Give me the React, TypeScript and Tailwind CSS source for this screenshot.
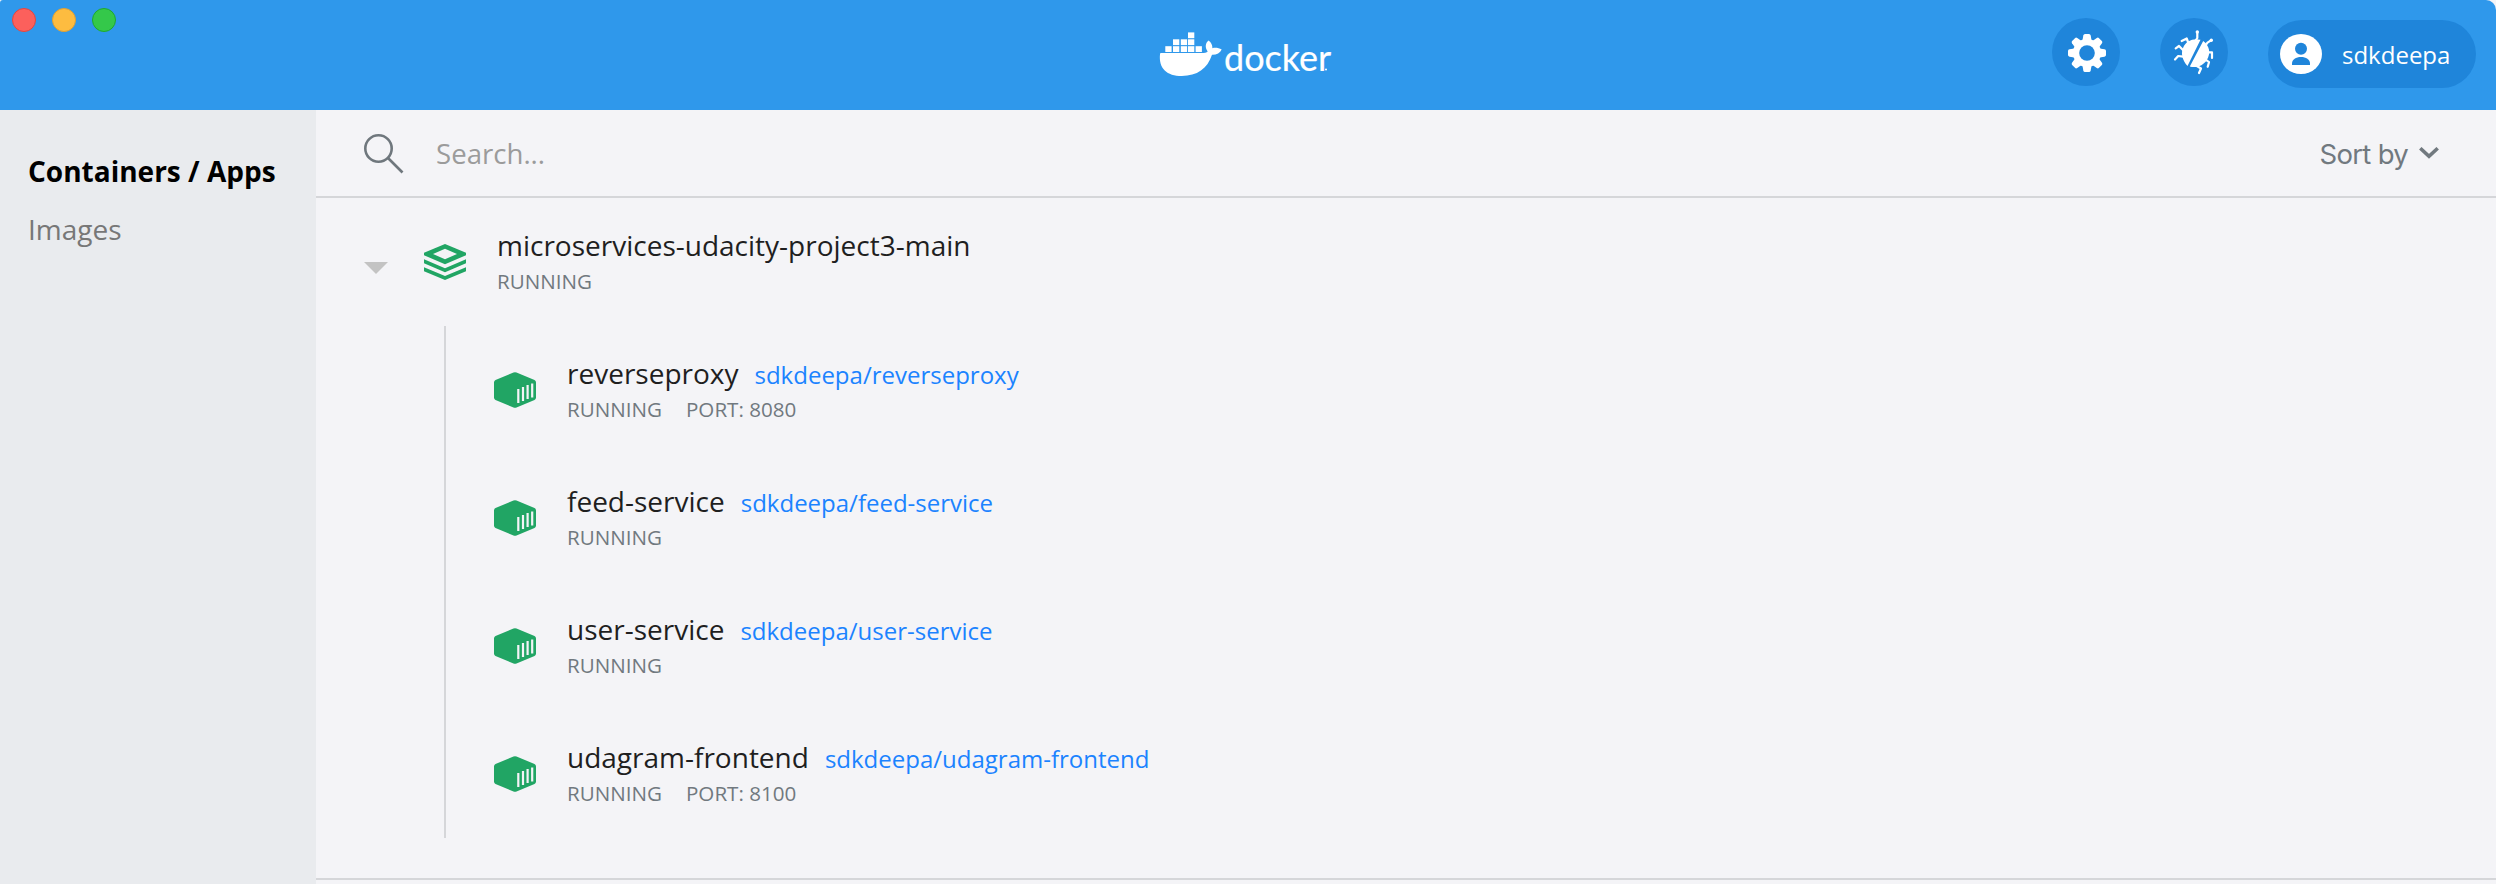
import React from "react";

function TrafficLights() {
  return (
    <div className="flex gap-4 pt-2 pl-3">
      <span className="h-6 w-6 rounded-full border border-[#e2463f] bg-[#fc605c]" />
      <span className="h-6 w-6 rounded-full border border-[#e0a032] bg-[#fdbc40]" />
      <span className="h-6 w-6 rounded-full border border-[#1fa82f] bg-[#34c84a]" />
    </div>
  );
}

function DockerLogo() {
  const boxes: [number, number][] = [
    [48, 2.4],
    [33, 9.3], [40.8, 9.3], [48, 9.3],
    [25.3, 16.2], [33, 16.2], [40.8, 16.2], [48, 16.2], [55.6, 16.2],
  ];
  return (
    <svg viewBox="0 0 64 50" className="h-[50px] w-[64px] overflow-visible" fill="white">
      <g transform="translate(-21 0)">
        {boxes.map(([x, y]) => (
          <rect key={`${x}-${y}`} x={x} y={y} width="6.3" height="5.8" />
        ))}
        <path d="M21.200 23H61.500c3 0 5.200-.5 6.200-1.600-3.200-4-2-8.600.8-10.800 2.800 2 4 4.600 3.900 7.600 3-.8 6.600-.2 9.300 1.400-1.600 3.600-5.400 5.400-9.700 5.200C67.600 38.600 57 46 41.800 46 27 46 18.500 38.500 20 24.200 20 23.500 20.500 23 21.200 23z" />
      </g>
    </svg>
  );
}

function DockerWordmark() {
  return (
    <svg viewBox="0 0 110 54" className="h-[54px] w-[110px] overflow-visible" fill="white">
      <text x="-1" y="41" stroke="white" strokeWidth="0.200" strokeLinejoin="round" fontFamily="Lato, sans-serif" fontSize="36" textLength="107">docker</text>
      <circle cx="101" cy="39.600" r="1" />
    </svg>
  );
}

function GearIcon() {
  return (
    <svg viewBox="-19 -19 38 38" className="mt-0.5 ml-0.5 h-[38px] w-[38px]" fill="white">
      {[0, 45, 90, 135, 180, 225, 270, 315].map((a) => (
        <path key={a} d="M-4.800-11-3.700-17.500Q-3.400-19-2-19H2Q3.400-19 3.700-17.500L4.800-11z" transform={`rotate(${a})`} />
      ))}
      <circle r="14" />
      <circle r="7.800" fill="#1f85da" />
    </svg>
  );
}

function BugIcon() {
  return (
    <svg viewBox="0 0 68 68" className="h-[68px] w-[68px]" fill="none" stroke="white" strokeWidth="2.200" strokeLinejoin="round" strokeLinecap="round">
      <path
        d="M40.500 21.800C33 20 26.500 22.800 23.400 29 20.600 34.600 22 42 27.500 48zM43.200 23C49.500 27.500 51 35 47 41.800 43.600 47.600 36.500 50.300 29.800 48.600z"
        fill="white"
        stroke="none"
      />
      <path d="M37.300 14.500v5.500l-2 3M51 22.300l-3.500 2.300-2.500 3.400" />
      <path d="M21.700 23l5-2.500 1.700 4.500M15.700 30.300 19 28l4 4M15 41.500l3.200-3.500 5 .600" />
      <path d="M47 34.400h5V40M45.500 41.500l3.500 2.700-1.300 4.600M36 47.500l5 3-2 4.500" />
      <circle cx="37.300" cy="14" r="1.700" fill="white" stroke="none" />
      <circle cx="51.300" cy="22.200" r="1.700" fill="white" stroke="none" />
    </svg>
  );
}

function AccountIcon() {
  return (
    <svg viewBox="0 0 42 40" className="h-10 w-[42px]">
      <ellipse cx="21" cy="20" rx="21" ry="20" fill="white" />
      <circle cx="21" cy="14.800" r="6" fill="#1f85da" />
      <path d="M12 31v-1.500c0-4 4-6.500 9-6.500s9 2.500 9 6.500V31z" fill="#1f85da" />
    </svg>
  );
}

function Header() {
  return (
    <header className="grid h-[110px] grid-cols-3 rounded-tl-[3px] rounded-tr-[10px] bg-[#2f98eb]">
      <TrafficLights />
      <div className="flex justify-center pt-[30px]">
        <DockerLogo />
        <DockerWordmark />
      </div>
      <div className="flex justify-end pt-[18px] pr-5">
        <button className="mr-10 flex h-[68px] w-[68px] items-center justify-center rounded-full bg-[#1f85da]"><GearIcon /></button>
        <button className="mr-10 h-[68px] w-[68px] rounded-full bg-[#1f85da]"><BugIcon /></button>
        <button className="mt-0.5 flex h-[68px] w-[208px] items-center rounded-full bg-[#1f85da] pl-3 text-[24px] text-white">
          <AccountIcon />
          <span className="ml-5 pt-0.5">sdkdeepa</span>
        </button>
      </div>
    </header>
  );
}

function Sidebar() {
  return (
    <aside className="w-[316px] shrink-0 bg-[#e9ebee] pt-[42px] pl-7 text-[28px] leading-[38px]">
      <div className="font-bold text-black">Containers / Apps</div>
      <div className="mt-5 text-[#777]">Images</div>
    </aside>
  );
}

function ContainerIcon() {
  return (
    <svg viewBox="0 0 42 36" className="h-9 w-[42px]">
      <path d="M19.500.5q1.500-.7 3 0L40.500 8Q42 8.700 42 10.500V25.500Q42 27.300 40.500 28L22.500 35.500q-1.500.7-3 0L1.500 28Q0 27.300 0 25.500V10.500Q0 8.700 1.500 8z" fill="#21a564" />
      <path d="M24.300 17v14M29 15v14M33.600 13v14M38.200 11.500v14" stroke="#f4f4f7" strokeWidth="2.200" />
    </svg>
  );
}

function StackIcon() {
  return (
    <svg viewBox="0 0 42 36" className="h-9 w-[42px]" fill="#21a564">
      <path fillRule="evenodd" d="M21 0 42 8.700V11.300L21 20.300 0 11.300V8.700zM21 4.800 9 10l12 5.200L33 10z" />
      <path d="M0 15.300 21 24.200 42 15.300V19.300L21 28.200 0 19.300zM0 23.200 21 32 42 23.200V27.200L21 36 0 27.200z" />
    </svg>
  );
}

type Service = { name: string; image: string; port?: string };

const services: Service[] = [
  { name: "reverseproxy", image: "sdkdeepa/reverseproxy", port: "8080" },
  { name: "feed-service", image: "sdkdeepa/feed-service" },
  { name: "user-service", image: "sdkdeepa/user-service" },
  { name: "udagram-frontend", image: "sdkdeepa/udagram-frontend", port: "8100" },
];

function ServiceRow({ name, image, port }: Service) {
  return (
    <div className="flex h-32 pt-7 pl-12">
      <div className="pt-[18px]"><ContainerIcon /></div>
      <div className="ml-[31px]">
        <div className="flex h-[38px] items-baseline leading-[38px]">
          <span className="text-[28px] text-[#1f1f1f]">{name}</span>
          <span className="ml-4 text-[24px] text-[#1b83ff]">{image}</span>
        </div>
        <div className="flex gap-6 text-[20.6px] leading-[35px] text-[#71797f]">
          <span>RUNNING</span>
          {port && <span>PORT: {port}</span>}
        </div>
      </div>
    </div>
  );
}

export default function App() {
  return (
    <div className="flex h-[884px] w-[2496px] flex-col overflow-hidden bg-[#f4f4f7] font-['Open_Sans',sans-serif]">
      <Header />
      <div className="flex flex-1">
        <Sidebar />
        <main className="flex-1">
          <div className="flex h-[88px] items-center border-b-2 border-[#d5d6d9] pr-[57px] pl-12">
            <svg viewBox="0 0 40 40" className="mt-0.5 h-10 w-10" fill="none" stroke="#6f777d" strokeWidth="2.600">
              <circle cx="14.500" cy="14.500" r="13.200" />
              <path d="m24 24 14.500 14.500" />
            </svg>
            <span className="mt-0.5 ml-8 text-[27.6px] text-[#9b9b9b]">Search...</span>
            <span className="mt-1 ml-auto font-['Inter',sans-serif] text-[27.5px] tracking-[-0.7px] text-[#71797f]">Sort by</span>
            <svg viewBox="0 0 20 12" className="ml-[11px] h-3 w-5" fill="none" stroke="#71797f" strokeWidth="3.600"><path d="m1.300 1.300 8.700 8 8.700-8" /></svg>
          </div>
          <section className="h-[682px] border-b-2 border-[#d5d6d9]">
            <div className="flex h-32 pt-7 pl-12">
              <svg viewBox="0 0 24 12" className="mt-9 h-3 w-6" fill="#c3c3c3"><path d="M0 0h24L12 12z" /></svg>
              <div className="ml-9 pt-[18px]"><StackIcon /></div>
              <div className="ml-[31px]">
                <div className="text-[28px] leading-[38px] text-[#1f1f1f]">microservices-udacity-project3-main</div>
                <div className="text-[20.6px] leading-[35px] text-[#71797f]">RUNNING</div>
              </div>
            </div>
            <div className="ml-32 h-[512px] border-l-2 border-[#d5d6d9]">
              {services.map((s) => <ServiceRow key={s.name} {...s} />)}
            </div>
          </section>
        </main>
      </div>
    </div>
  );
}
